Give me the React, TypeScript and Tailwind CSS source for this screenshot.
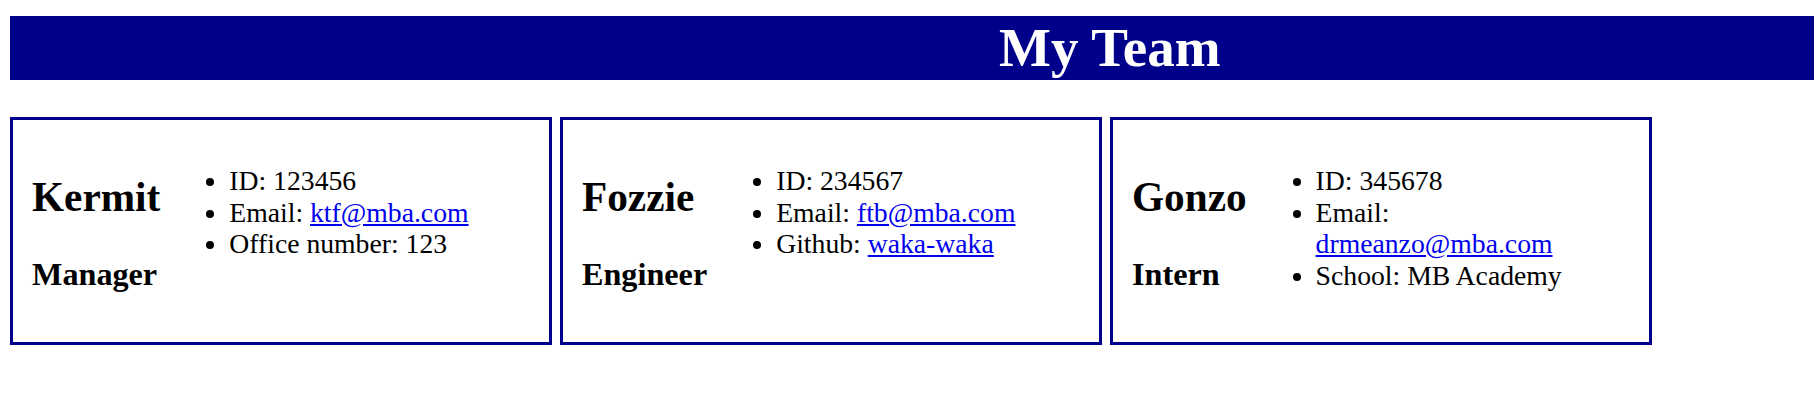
import React from "react";

type Member = {
  name: string;
  role: string;
  items: { label: string; value: string; link?: boolean }[];
};

const members: Member[] = [
  {
    name: "Kermit",
    role: "Manager",
    items: [
      { label: "ID: ", value: "123456" },
      { label: "Email: ", value: "ktf@mba.com", link: true },
      { label: "Office number: ", value: "123" },
    ],
  },
  {
    name: "Fozzie",
    role: "Engineer",
    items: [
      { label: "ID: ", value: "234567" },
      { label: "Email: ", value: "ftb@mba.com", link: true },
      { label: "Github: ", value: "waka-waka", link: true },
    ],
  },
  {
    name: "Gonzo",
    role: "Intern",
    items: [
      { label: "ID: ", value: "345678" },
      { label: "Email: ", value: "drmeanzo@mba.com", link: true },
      { label: "School: ", value: "MB Academy" },
    ],
  },
];

export default function App() {
  return (
    <div className="min-h-[404px] bg-white pt-[16px] pl-[10px] font-['Liberation_Serif','Times_New_Roman',serif] text-black">
      <div className="h-[64px] bg-[#00008b] pl-[989px] text-[55px] leading-[64px] font-bold text-white whitespace-nowrap">
        My Team
      </div>
      <div className="mt-[37px] flex gap-[8px]">
        {members.map((m) => (
          <div
            key={m.name}
            className="flex h-[228px] w-[542px] shrink-0 border-[3px] border-[#00008b] pl-[19px] pr-[30px]"
          >
            <div className="mt-[54px] shrink-0">
              <h2 className="text-[41.25px] leading-[47px] font-bold">{m.name}</h2>
              <h3 className="mt-[35px] text-[32.2px] leading-[37px] font-bold">{m.role}</h3>
            </div>
            <ul className="mt-[45px] list-disc list-outside pl-[69px] text-[27.7px] leading-[31.6px]">
              {m.items.map((it) => (
                <li key={it.label}>
                  {it.label}
                  {it.link ? (
                    <a href="#" className="text-[#0000ee] underline">
                      {it.value}
                    </a>
                  ) : (
                    it.value
                  )}
                </li>
              ))}
            </ul>
          </div>
        ))}
      </div>
    </div>
  );
}
